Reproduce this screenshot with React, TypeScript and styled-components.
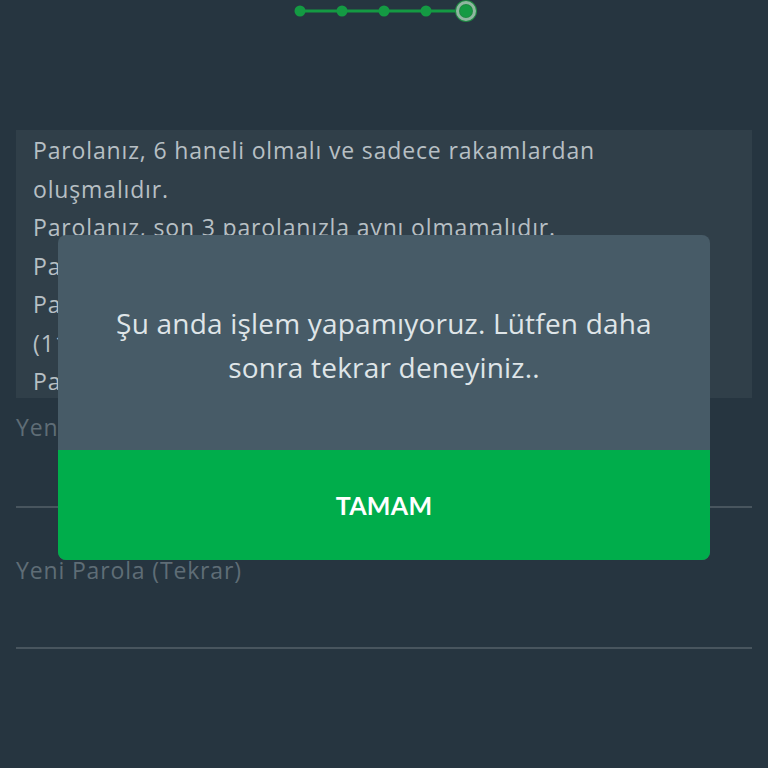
import React from "react";
import styled, { createGlobalStyle } from "styled-components";

const Global = createGlobalStyle`
  html, body { margin: 0; padding: 0; background: #263540; }
  body { font-family: "Open Sans", Lato, sans-serif; }
  * { box-sizing: border-box; }
`;

const Page = styled.div`
  width: 768px;
  height: 768px;
  background: #263540;
  overflow: hidden;
  position: relative;
  display: flex;
  flex-direction: column;
  padding: 0 16px;
`;

const StepperRow = styled.div`
  height: 23px;
  display: flex;
  justify-content: center;
  align-items: flex-start;
`;

const InfoBox = styled.div`
  margin-top: 107px;
  background: #303f49;
  height: 268px;
  padding: 1px 30px 0 17px;
  overflow: hidden;
`;

const InfoLine = styled.p`
  margin: 0;
  font-size: 23px;
  line-height: 38.5px;
  color: #b7bfc4;
  font-weight: 400;
  letter-spacing: 0.85px;
`;

const Field = styled.div<{ $top: number; $h: number }>`
  margin-top: ${(p) => p.$top}px;
  height: ${(p) => p.$h}px;
  border-bottom: 2px solid #48555e;
  display: flex;
  align-items: flex-start;
`;

const FieldLabel = styled.span`
  font-size: 23px;
  line-height: 38px;
  color: #5f6d76;
  letter-spacing: 0.85px;
`;

const Overlay = styled.div`
  position: absolute;
  inset: 0;
  display: flex;
  justify-content: center;
  align-items: flex-start;
  padding-top: 235px;
`;

const Dialog = styled.div`
  width: 652px;
  border-radius: 8px;
  overflow: hidden;
  display: flex;
  flex-direction: column;
  background: #475b67;
`;

const Message = styled.div`
  height: 215px;
  padding: 66px 50px 0;
  text-align: center;
  font-size: 28px;
  line-height: 44px;
  color: #dfe5e8;
  letter-spacing: 0.2px;
`;

const OkButton = styled.button`
  height: 110px;
  border: none;
  background: #00ad4b;
  color: #ffffff;
  font-family: Lato, "Open Sans", sans-serif;
  font-weight: 700;
  font-size: 25px;
  letter-spacing: 0.3px;
  display: flex;
  align-items: center;
  justify-content: center;
  padding: 0;
`;

function Stepper() {
  const dots = [300, 342, 384, 426];
  return (
    <svg width="200" height="23" viewBox="284 0 200 23">
      <line x1="300" y1="11" x2="456" y2="11" stroke="#149a43" strokeWidth="3" />
      {dots.map((x) => (
        <circle key={x} cx={x} cy="11" r="5.5" fill="#149a43" />
      ))}
      <circle cx="466" cy="11" r="11" fill="#1f8a43" />
      <circle cx="466" cy="11" r="8.5" fill="none" stroke="#8fb6a0" strokeWidth="3" />
      <circle cx="466" cy="11" r="6" fill="#149a43" />
    </svg>
  );
}

export default function App() {
  return (
    <>
      <Global />
      <Page>
        <StepperRow>
          <Stepper />
        </StepperRow>
        <InfoBox>
          <InfoLine>Parolanız, 6 haneli olmalı ve sadece rakamlardan oluşmalıdır.</InfoLine>
          <InfoLine>Parolanız, son 3 parolanızla aynı olmamalıdır.</InfoLine>
          <InfoLine>Parolanız, doğum tarihinizi içermemelidir.</InfoLine>
          <InfoLine>Parolanız, tekrar eden rakamlardan oluşmamalıdır</InfoLine>
          <InfoLine>(111111 gibi).</InfoLine>
          <InfoLine>Parolanız, ardışık rakamlardan oluşmamalıdır.</InfoLine>
        </InfoBox>
        <Field $top={10} $h={100}>
          <FieldLabel>Yeni Parola</FieldLabel>
        </Field>
        <Field $top={43} $h={98}>
          <FieldLabel>Yeni Parola (Tekrar)</FieldLabel>
        </Field>
        <Overlay>
          <Dialog>
            <Message>Şu anda işlem yapamıyoruz. Lütfen daha sonra tekrar deneyiniz..</Message>
            <OkButton>TAMAM</OkButton>
          </Dialog>
        </Overlay>
      </Page>
    </>
  );
}
